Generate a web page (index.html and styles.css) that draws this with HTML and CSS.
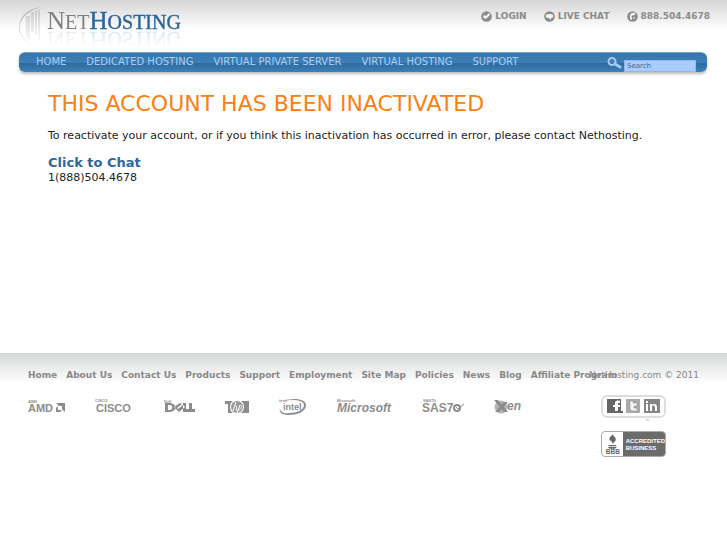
FILE: index.html
```
<!DOCTYPE html>
<html lang="en">
<head>
    <meta charset="UTF-8">
    <title>NetHosting - Account Inactivated</title>
    <link rel="stylesheet" href="styles.css">
</head>
<body>
    <header class="header">
        <div class="top">
            <a class="logo" href="#">
                <svg width="24" height="42" viewBox="0 0 24 42">
                    <defs>
                        <linearGradient id="fade" x1="0" y1="0" x2="0" y2="1">
                            <stop offset="0" stop-color="#b4b4b4"/>
                            <stop offset="1" stop-color="#f4f4f4"/>
                        </linearGradient>
                    </defs>
                    <path d="M22 1C8 3 0 11 0 21c0 9 6 15 14 18C7 35 1 30 1 21 1 12 9 5 22 1z" fill="url(#fade)"/>
                    <path d="M7 10h4v24l-4-3zM12 6h3v20h-3zM16 5h2v24h-2zM19 4h2v30h-2z" fill="url(#fade)" opacity=".6"/>
                </svg>
                <span class="logo-text"><span class="net"><b>N</b>ET</span><span class="hosting"><b>H</b>OSTING</span></span>
            </a>
            <div class="quick">
                <a href="#">
                    <svg width="11" height="11" viewBox="0 0 11 11"><circle cx="5.5" cy="5.5" r="5.3" fill="#8b8b8b"/><path d="M2 6l1-2 2 1 3-3 1 2-3 3-2 1z" fill="#f2f2f2"/></svg>
                    LOGIN
                </a>
                <a href="#">
                    <svg width="11" height="11" viewBox="0 0 11 11"><circle cx="5.5" cy="5.5" r="5.3" fill="#8b8b8b"/><path d="M4 3h3c3 0 3 4 0 4v2L5 7H4C1 7 1 3 4 3z" fill="#f4f4f4"/></svg>
                    LIVE CHAT
                </a>
                <a href="#">
                    <svg width="11" height="11" viewBox="0 0 11 11"><circle cx="5.5" cy="5.5" r="5.3" fill="#8b8b8b"/><path d="M8 2C4 1 2 4 3.500 8.500L5 9V7L4.500 6C4.500 5 5 4.500 6 4l1 .5L8.500 3zM7 6h1L7 8H6z" fill="#f4f4f4"/></svg>
                    888.504.4678
                </a>
            </div>
        </div>
        <nav class="nav">
            <a href="#">HOME</a>
            <a href="#">DEDICATED HOSTING</a>
            <a href="#">VIRTUAL PRIVATE SERVER</a>
            <a href="#">VIRTUAL HOSTING</a>
            <a href="#">SUPPORT</a>
            <form class="search">
                <button type="submit" aria-label="Search">
                    <svg width="15" height="13" viewBox="0 0 15 13"><circle cx="5" cy="4.5" r="3.5" fill="none" stroke="#a3c9f5" stroke-width="2"/><path d="M8 7l5 3" stroke="#a3c9f5" stroke-width="3" stroke-linecap="round"/></svg>
                </button>
                <input type="text" value="Search" aria-label="Search">
            </form>
        </nav>
    </header>

    <main class="content">
        <h1>THIS ACCOUNT HAS BEEN INACTIVATED</h1>
        <p>To reactivate your account, or if you think this inactivation has occurred in error, please contact Nethosting.</p>
        <a class="chat" href="#">Click to Chat</a>
        <p>1(888)504.4678</p>
    </main>

    <footer class="footer">
        <div class="links">
            <a href="#">Home</a>
            <a href="#">About Us</a>
            <a href="#">Contact Us</a>
            <a href="#">Products</a>
            <a href="#">Support</a>
            <a href="#">Employment</a>
            <a href="#">Site Map</a>
            <a href="#">Policies</a>
            <a href="#">News</a>
            <a href="#">Blog</a>
            <a href="#">Affiliate Program</a>
            <span class="copyright">NetHosting.com © 2011</span>
        </div>
        <div class="bottom">
            <div class="partners">
                <svg width="37" height="18" viewBox="0 0 37 18">
                    <text class="tiny" x="0" y="5">AMD</text>
                    <text x="0" y="14" font-size="11">AMD</text>
                    <path d="M28 5h9v9l-3-3V8h-3zM28 10l2-2v4h4l-2 2h-4z"/>
                </svg>
                <svg width="39" height="18" viewBox="0 0 39 18">
                    <text class="tiny" x="0" y="4">CISCO</text>
                    <text x="1" y="14" font-size="11">CISCO</text>
                </svg>
                <svg width="31" height="18" viewBox="0 0 31 18">
                    <text class="tiny" x="0" y="5">Dell</text>
                    <path d="M1 5h5c7 0 7 9 0 9H1zm3 2v5h2c3 0 3-5 0-5zM10 9l6-4 2 1-5 4 1 1 5-4 2 2-6 5zM19 5h3v6h3v3h-6zM25 5h3v6h3v3h-6z" fill-rule="evenodd"/>
                </svg>
                <svg width="24" height="18" viewBox="0 0 24 18">
                    <path d="M0 3h8C4 5 4 13 8 15H3V6H0zM16 3h8v12h-8c4-3 4-9 0-12z"/>
                    <circle cx="12" cy="9" r="6" fill="#999"/>
                    <path d="M11 4L8 13M9 9c3-3 3 0 2 4M15 7l-3 8M14 8c4-2 3 4-1 4" fill="none" stroke="#fff"/>
                </svg>
                <svg width="28" height="18" viewBox="0 0 28 18">
                    <path d="M4 3C15-1 27 1 27 7c0 7-9 10-18 10C2 17 0 14 1 10c0 4 4 6 9 5 8 0 15-3 15-8C25 2 14 1 4 3z"/>
                    <text class="tiny" x="0" y="4">intel</text>
                    <text x="4" y="12" font-size="9">intel</text>
                </svg>
                <svg width="55" height="18" viewBox="0 0 55 18">
                    <text class="tiny" x="0" y="4">Microsoft</text>
                    <text class="slanted" x="0" y="14" font-size="12">Microsoft</text>
                </svg>
                <svg width="42" height="18" viewBox="0 0 42 18">
                    <text class="tiny" x="1" y="4">SAS70</text>
                    <text x="0" y="14" font-size="12">SAS7</text>
                    <circle cx="35" cy="10" r="3" fill="none" stroke="#8c8c8c" stroke-width="2"/>
                    <path d="M34 9l2 2 6-5" fill="none" stroke="#8c8c8c"/>
                </svg>
                <svg width="29" height="18" viewBox="0 0 29 18">
                    <circle cx="7" cy="9" r="6.500" fill="#b5b5b5"/>
                    <path d="M0 2h4l10 12h-4zM10 4h4L5 14H1z"/>
                    <text class="slanted" x="13" y="12" font-size="12">en</text>
                </svg>
            </div>
            <div class="badges">
                <div class="social">
                    <a href="#" aria-label="Facebook"><svg width="16" height="15" viewBox="0 0 16 15"><path d="M0 0h14v12h2v2H0z" fill="#666"/><path d="M8 12V8H6V6h2V4c0-2 2-3 5-2v2h-2v2h2v2h-2v4z" fill="#fff"/></svg></a>
                    <a href="#" aria-label="Twitter"><svg width="15" height="15" viewBox="0 0 15 15"><path d="M0 0h14v14H0z" fill="#aaa"/><path d="M4 2v7c0 2 1 3 4 3h3V9H8V7h3V4H7V2z" fill="#f4f4f4" stroke="#888" stroke-width=".5"/></svg></a>
                    <a href="#" aria-label="LinkedIn"><svg width="16" height="15" viewBox="0 0 16 15"><path d="M0 0h16v14H0z" fill="#858585"/><path d="M2 5h2v7H2zM2 2h2v2H2zM6 5h2v1c2-2 5-1 5 2v4h-2V8c0-2-3-2-3 0v4H6z" fill="#fff"/></svg></a>
                    <span class="tm">™</span>
                </div>
                <a class="bbb" href="#">
                    <svg width="22" height="24" viewBox="0 0 22 24"><path d="M12 1c-2 2 5 4 2 8l-3 3c1-3-4-3-3-6 0-2 3-3 4-5zM7 13h8v1H7zM6 15h10l-2 2H8z" fill="#686868"/><text class="bbb-mark" x="4" y="23">BBB</text></svg>
                    <span>ACCREDITED<br>BUSINESS</span>
                </a>
            </div>
        </div>
    </footer>
</body>
</html>
```
FILE: styles.css
```
* {
    box-sizing: border-box;
}
body {
    margin: 0;
    font-family: "DejaVu Sans", Verdana, sans-serif;
    font-size: 11px;
    color: #222;
    background: #fff;
}
a {
    color: inherit;
    text-decoration: none;
}
svg {
    display: block;
}

/* header */
.header {
    padding: 0 20px 0 19px;
    background: linear-gradient(#d6d6d6, #fff 30px);
}
.top {
    display: flex;
    justify-content: space-between;
    height: 52px;
    padding-top: 6px;
}
.logo {
    display: flex;
    gap: 4px;
}
.logo-text {
    height: 24px;
    margin-top: 3px;
    font-family: "Liberation Serif", serif;
    font-size: 20px;
    line-height: 24px;
    -webkit-box-reflect: below -5px linear-gradient(transparent 20%, rgba(0,0,0,0.2));
}
.logo-text b {
    font-size: 25px;
    font-weight: normal;
}
.net {
    color: #7f7f7f;
}
.hosting {
    color: #2c659c;
    -webkit-text-stroke: 0.4px #2c659c;
}
.quick {
    display: flex;
    gap: 17px;
    margin-right: -3px;
    font-size: 9px;
    font-weight: bold;
    color: #8b8b8b;
}
.quick a {
    display: flex;
    align-items: center;
    gap: 3px;
    height: 20px;
}
.nav {
    display: flex;
    align-items: center;
    gap: 20px;
    height: 20px;
    padding: 0 11px 0 17px;
    border-top: 1px solid #78a5cb;
    border-radius: 6px;
    background: linear-gradient(#3475ad, #3f80b6 10px, #2f699f 10px, #3d80b8);
    box-shadow: 0 2px 3px #bbb;
    color: #a9cff5;
    font-size: 10px;
    line-height: 16px;
    white-space: nowrap;
}
.nav > a {
    padding-bottom: 2px;
}
.search {
    display: flex;
    gap: 2px;
    height: 19px;
    margin-left: auto;
}
.search button {
    padding: 2px 0 0;
    border: 0;
    background: none;
}
.search input {
    width: 72px;
    height: 12px;
    margin-top: 7px;
    padding: 0 2px;
    border: 1px solid #8fb7ea;
    background: #a9ccfb;
    color: #3c6795;
    font-family: inherit;
    font-size: 7px;
}

/* content */
.content {
    min-height: 281px;
    padding: 18px 48px;
}
.content h1 {
    margin: 0 0 10px;
    font-size: 22px;
    line-height: 28px;
    font-weight: normal;
    color: #fb8012;
}
.content p {
    margin: 0;
    line-height: 16px;
}
.chat {
    display: block;
    margin-top: 12px;
    font-size: 13px;
    line-height: 14px;
    font-weight: bold;
    color: #2f679d;
}

/* footer */
.footer {
    padding: 14px 28px;
    background: linear-gradient(#d6d8d8, #fff 30px);
    color: #888;
}
.links {
    display: flex;
    gap: 9px;
    position: relative;
    font-size: 9px;
    line-height: 16px;
    font-weight: bold;
    white-space: nowrap;
}
.copyright {
    position: absolute;
    right: 0;
    font-weight: normal;
}
.bottom {
    display: flex;
    justify-content: space-between;
    padding: 12px 33px 0 0;
}
.partners {
    display: flex;
    gap: 30px;
    padding-top: 3px;
    fill: #8c8c8c;
    font-family: "Liberation Sans", Arial, sans-serif;
    font-weight: bold;
}
.tiny {
    font-size: 4px;
}
.slanted {
    font-style: italic;
}
.badges {
    display: flex;
    flex-direction: column;
    gap: 13px;
}
.social {
    display: flex;
    align-items: center;
    justify-content: center;
    gap: 3px;
    position: relative;
    width: 65px;
    height: 23px;
    border: 2px solid #ddd;
    border-radius: 6px;
}
.tm {
    position: absolute;
    right: 14px;
    bottom: -8px;
    font-size: 5px;
    line-height: 6px;
}
.bbb {
    display: flex;
    width: 65px;
    height: 26px;
    border: 1px solid #aaa;
    border-radius: 4px;
    overflow: hidden;
    background: #fff;
}
.bbb span {
    flex: 1;
    padding: 6px 0 0 3px;
    background: #6b6b6b;
    color: #fff;
    font-family: "Liberation Sans", Arial, sans-serif;
    font-size: 6px;
    line-height: 7px;
    font-weight: bold;
}
.bbb-mark {
    fill: #686868;
    font-family: "Liberation Sans", Arial, sans-serif;
    font-size: 7px;
    font-weight: bold;
}
```
